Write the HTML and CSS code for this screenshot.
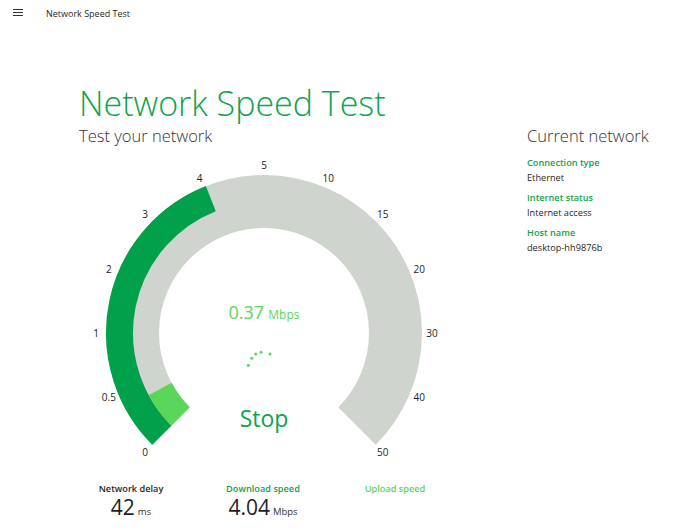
FILE: index.html
```html
<!DOCTYPE html>
<html lang="en">
<head>
  <meta charset="UTF-8" />
  <meta name="viewport" content="width=device-width, initial-scale=1.0"/>
  <title>Network Speed Test</title>
  <link rel="stylesheet" href="styles.css">
</head>
<body>
  <header class="topbar">
    <button class="menu-btn" aria-label="Menu">
      <svg width="10" height="8" viewBox="0 0 10 8">
        <path d="M0 0.5H10M0 3.5H10M0 6.5H10" stroke="#333" stroke-width="1" fill="none"/>
      </svg>
    </button>
    <span class="app-name">Network Speed Test</span>
  </header>

  <div class="layout">
    <main class="main">
      <h1 class="title">Network Speed Test</h1>
      <h2 class="subtitle">Test your network</h2>

      <div class="gauge">
        <svg class="dial" width="360" height="310" viewBox="-180 -178 360 310">
          <path class="track" d="M -92.98 92.98 A 131.5 131.5 0 1 1 92.98 92.98"/>
          <path class="bar-download" d="M -102.18 102.18 A 144.5 144.5 0 0 1 -53.19 -134.36"/>
          <path class="bar-current" d="M -83.44 83.44 A 118 118 0 0 1 -103.86 56.03"/>
          <g class="ticks">
            <text x="-118.8" y="118.8">0</text>
            <text x="-155.2" y="64.3">0.5</text>
            <text x="-168" y="0">1</text>
            <text x="-155.2" y="-64.3">2</text>
            <text x="-118.8" y="-118.8">3</text>
            <text x="-64.3" y="-155.2">4</text>
            <text x="0" y="-168">5</text>
            <text x="64.3" y="-155.2">10</text>
            <text x="118.8" y="-118.8">15</text>
            <text x="155.2" y="-64.3">20</text>
            <text x="168" y="0">30</text>
            <text x="155.2" y="64.3">40</text>
            <text x="118.8" y="118.8">50</text>
          </g>
        </svg>

        <div class="readout">
          <div class="live-speed"><span class="live-num">0.37</span> <span class="live-unit">Mbps</span></div>
          <svg class="spinner" width="36" height="36" viewBox="-18 -18 36 36">
            <circle cx="-15.7" cy="-0.7" r="1.5"/>
            <circle cx="-12.3" cy="-7.7" r="1.5"/>
            <circle cx="-8.3" cy="-12" r="1.5"/>
            <circle cx="-3" cy="-13.7" r="1.5"/>
            <circle cx="6" cy="-12" r="1.5"/>
          </svg>
          <button class="stop-btn">Stop</button>
        </div>
      </div>

      <div class="stats">
        <div class="stat">
          <div class="stat-label">Network delay</div>
          <div class="stat-value">42<span class="stat-unit">ms</span></div>
        </div>
        <div class="stat">
          <div class="stat-label download">Download speed</div>
          <div class="stat-value">4.04<span class="stat-unit">Mbps</span></div>
        </div>
        <div class="stat">
          <div class="stat-label upload">Upload speed</div>
        </div>
      </div>
    </main>

    <aside class="side">
      <h2 class="side-title">Current network</h2>
      <div class="info">
        <div class="info-label">Connection type</div>
        <div class="info-value">Ethernet</div>
      </div>
      <div class="info">
        <div class="info-label">Internet status</div>
        <div class="info-value">Internet access</div>
      </div>
      <div class="info">
        <div class="info-label">Host name</div>
        <div class="info-value">desktop-hh9876b</div>
      </div>
    </aside>
  </div>
</body>
</html>
```

FILE: styles.css
```css
body {
  font-family: "Open Sans", "Noto Sans", sans-serif;
  background-color: #ffffff;
  color: #1f1f1f;
  margin: 0;
  width: 680px;
  height: 531px;
  overflow: hidden;
}
.topbar {
  height: 26px;
  display: flex;
  align-items: center;
}
.menu-btn {
  width: 46px;
  height: 26px;
  padding: 0 0 0 13px;
  border: none;
  background: none;
  display: flex;
  align-items: center;
}
.app-name {
  font-size: 9px;
  color: #1f1f1f;
}
.layout {
  display: flex;
  padding: 57px 0 0 79px;
}
.main {
  width: 448px;
}
.title {
  margin: 0;
  font-size: 34px;
  line-height: 40px;
  font-weight: 300;
  color: #10a34f;
}
.subtitle {
  margin: 2px 0 0 0;
  font-size: 16.5px;
  line-height: 22px;
  font-weight: 300;
  color: #333;
}
.gauge {
  position: relative;
  width: 360px;
  height: 310px;
  margin: 8px 0 0 5px;
}
.dial {
  display: block;
}
.track {
  fill: none;
  stroke: #cfd4cf;
  stroke-width: 53;
}
.bar-download {
  fill: none;
  stroke: #01a04a;
  stroke-width: 27;
}
.bar-current {
  fill: none;
  stroke: #5ad65a;
  stroke-width: 26;
}
.ticks text {
  font-size: 10px;
  fill: #222;
  text-anchor: middle;
  dominant-baseline: central;
}
.readout {
  position: absolute;
  left: 0;
  right: 0;
  top: 146px;
  display: flex;
  flex-direction: column;
  align-items: center;
}
.live-speed {
  line-height: 22px;
  color: #5ad65a;
  white-space: nowrap;
}
.live-num {
  font-size: 18px;
}
.live-unit {
  font-size: 12px;
}
.spinner {
  display: block;
  margin-top: 22px;
  fill: #5ad65a;
}
.stop-btn {
  margin-top: 20px;
  padding: 0;
  border: none;
  background: none;
  font-family: inherit;
  font-size: 23px;
  line-height: 28px;
  color: #10a34f;
  cursor: pointer;
}
.stats {
  display: grid;
  grid-template-columns: 132px 132px 132px;
  margin: 18px 0 0 -14px;
  text-align: center;
}
.stat-label {
  font-size: 9.2px;
  line-height: 12px;
  font-weight: 600;
  color: #1f1f1f;
}
.stat-label.download {
  color: #10a34f;
}
.stat-label.upload {
  color: #5ad65a;
}
.stat-value {
  margin-top: 2px;
  font-size: 21px;
  line-height: 20px;
  color: #1f1f1f;
}
.stat-unit {
  font-size: 9.5px;
  margin-left: 3px;
  color: #333;
}
.side {
  margin-top: 42px;
}
.side-title {
  margin: 0 0 8px 0;
  font-size: 16.5px;
  line-height: 22px;
  font-weight: 300;
  color: #333;
}
.info {
  margin-bottom: 5px;
}
.info-label {
  font-size: 9.2px;
  line-height: 15px;
  font-weight: 600;
  color: #10a34f;
}
.info-value {
  font-size: 9.2px;
  line-height: 15px;
  color: #1f1f1f;
}
```
